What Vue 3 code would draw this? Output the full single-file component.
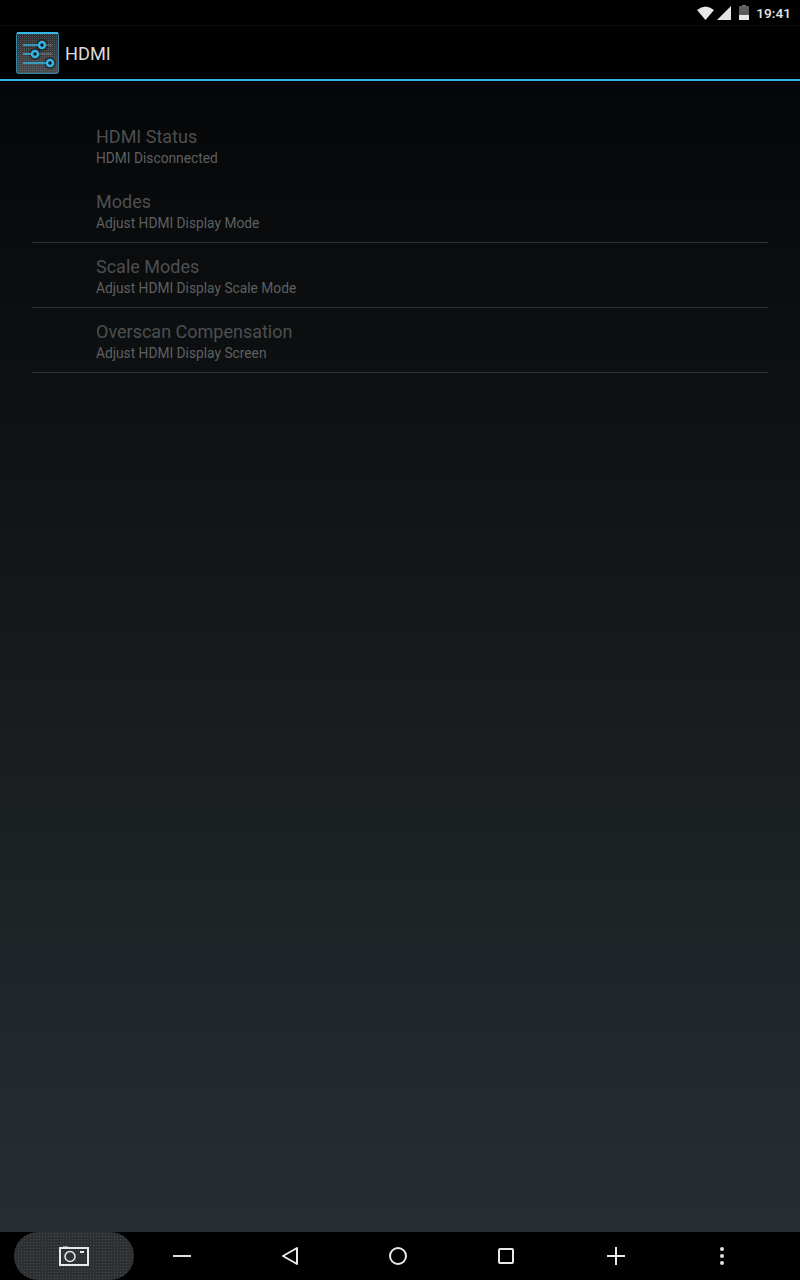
<script setup>
const items = [
  { title: "HDMI Status", sub: "HDMI Disconnected", line: false },
  { title: "Modes", sub: "Adjust HDMI Display Mode", line: true },
  { title: "Scale Modes", sub: "Adjust HDMI Display Scale Mode", line: true },
  { title: "Overscan Compensation", sub: "Adjust HDMI Display Screen", line: true },
];
</script>

<template>
  <div class="screen">
    <div class="statusbar">
      <svg class="wifi" width="17" height="14" viewBox="0 0 18 14" preserveAspectRatio="none">
        <path d="M0 4 Q9 -3 18 4 L9 14 Z" fill="#e8e8e8" />
      </svg>
      <svg class="signal" width="14" height="14" viewBox="0 0 14 14">
        <path d="M14 0 V14 H0 Z" fill="#e4e4e4" />
      </svg>
      <svg class="battery" width="10" height="15" viewBox="0 0 10 15">
        <rect x="3" y="0" width="4" height="2" fill="#777" />
        <rect x="0" y="1" width="10" height="9" fill="#5c5c5c" />
        <rect x="0" y="10" width="10" height="5" fill="#e8e8e8" />
      </svg>
      <span class="clock">19:41</span>
    </div>

    <div class="actionbar">
      <svg class="appicon" width="43" height="42" viewBox="0 0 43 42">
        <defs>
          <linearGradient id="iconbg" x1="0" y1="0" x2="0" y2="1">
            <stop offset="0" stop-color="#2b2e31" />
            <stop offset="1" stop-color="#4a4d50" />
          </linearGradient>
          <pattern id="icondots" width="2" height="2" patternUnits="userSpaceOnUse">
            <rect width="1" height="1" fill="#75787a" opacity="0.5" />
          </pattern>
        </defs>
        <rect x="0.5" y="0.5" width="42" height="41" rx="2" fill="url(#iconbg)" stroke="#2a88ad" />
        <rect x="0.5" y="0.5" width="42" height="41" rx="2" fill="url(#icondots)" />
        <rect x="1" y="0" width="41" height="2" fill="#33b5e5" />
        <circle cx="26" cy="13" r="6" fill="#000" opacity="0.4" />
        <circle cx="19" cy="22" r="6" fill="#000" opacity="0.4" />
        <circle cx="34" cy="31" r="6" fill="#000" opacity="0.4" />
        <path d="M7 13H26M7 22H19M7 31H34" stroke="#33b5e5" stroke-width="1.5" />
        <path d="M26 13H36M19 22H36" stroke="#7c8083" stroke-width="1" />
        <circle cx="26" cy="13" r="3" fill="#14181a" stroke="#33b5e5" stroke-width="2.5" />
        <circle cx="19" cy="22" r="3" fill="#14181a" stroke="#33b5e5" stroke-width="2.5" />
        <circle cx="34" cy="31" r="3" fill="#14181a" stroke="#33b5e5" stroke-width="2.5" />
      </svg>
      <span class="apptitle">HDMI</span>
    </div>

    <div class="content">
      <div class="list">
        <div v-for="item in items" :key="item.title" class="row" :class="{ ruled: item.line }">
          <div class="title">{{ item.title }}</div>
          <div class="sub">{{ item.sub }}</div>
        </div>
      </div>
    </div>

    <div class="navbar">
      <div class="shot">
        <svg width="30" height="20" viewBox="0 0 30 20" fill="none" stroke="#e8e8e8">
          <path d="M4 1H9" stroke-width="1" />
          <rect x="1" y="2" width="28" height="17" stroke-width="2" />
          <circle cx="11" cy="10.5" r="5" stroke-width="1.5" />
          <path d="M21 6H25" stroke-width="2" />
        </svg>
      </div>
      <div class="nav-btn">
        <svg width="18" height="2" viewBox="0 0 18 2"><rect width="18" height="2" fill="#e0e0e0" /></svg>
      </div>
      <div class="nav-btn">
        <svg width="18" height="20" viewBox="0 0 18 20" fill="none" stroke="#e8e8e8" stroke-width="2">
          <path d="M16 2V18L2 10Z" stroke-linejoin="round" />
        </svg>
      </div>
      <div class="nav-btn">
        <svg width="18" height="18" viewBox="0 0 18 18" fill="none" stroke="#e8e8e8" stroke-width="2">
          <circle cx="9" cy="9" r="8" />
        </svg>
      </div>
      <div class="nav-btn">
        <svg width="16" height="16" viewBox="0 0 16 16" fill="none" stroke="#e8e8e8" stroke-width="2">
          <rect x="1" y="1" width="14" height="14" rx="1" />
        </svg>
      </div>
      <div class="nav-btn">
        <svg width="18" height="18" viewBox="0 0 18 18"><path d="M0 9H18M9 0V18" stroke="#e8e8e8" stroke-width="2" /></svg>
      </div>
      <div class="nav-btn">
        <svg width="4" height="18" viewBox="0 0 4 18" fill="#e0e0e0">
          <circle cx="2" cy="2" r="2" /><circle cx="2" cy="9" r="2" /><circle cx="2" cy="16" r="2" />
        </svg>
      </div>
    </div>
  </div>
</template>

<style>
html, body { margin: 0; background: #000; }
</style>

<style scoped>
.screen {
  width: 800px;
  height: 1280px;
  display: flex;
  flex-direction: column;
  font-family: Roboto, "Liberation Sans", sans-serif;
  overflow: hidden;
}
.statusbar {
  height: 25px;
  background: #000;
  border-bottom: 1px solid #0c0c0c;
  display: flex;
  align-items: center;
  justify-content: flex-end;
  padding-right: 9px;
}
.wifi { margin-right: 3px; }
.signal { margin-right: 8px; }
.battery { margin-right: 7px; }
.clock { color: #e4e4e4; font-size: 13.7px; font-weight: 500; }
.actionbar {
  height: 53px;
  background: #000;
  border-bottom: 2px solid #33b5e5;
  display: flex;
  align-items: center;
  padding-left: 16px;
}
.apptitle { color: #dcdcdc; font-size: 18.2px; margin-left: 6px; padding-top: 2px; }
.content {
  flex: 1;
  background: linear-gradient(to bottom, #050607 0%, #272e32 100%);
  padding: 32px 32px 0;
}
.row {
  height: 65px;
  box-sizing: border-box;
  padding: 12px 0 0 64px;
}
.ruled { border-bottom: 1px solid #2f3236; }
.title { color: #4d4f51; font-size: 18px; line-height: 24px; }
.sub { color: #5e6062; font-size: 13.75px; line-height: 18px; }
.navbar {
  height: 48px;
  background: #000;
  display: grid;
  grid-template-columns: 128px 108px 108px 108px 108px 112px 100px;
  align-items: center;
  justify-items: center;
}
.shot {
  width: 120px;
  height: 48px;
  margin-left: 14px;
  justify-self: start;
  border-radius: 24px;
  background-color: #2c3033;
  background-image: radial-gradient(circle, #454a4d 0.8px, transparent 1px);
  background-size: 3px 3px;
  display: flex;
  align-items: center;
  justify-content: center;
}
.nav-btn { display: flex; align-items: center; justify-content: center; }
</style>
